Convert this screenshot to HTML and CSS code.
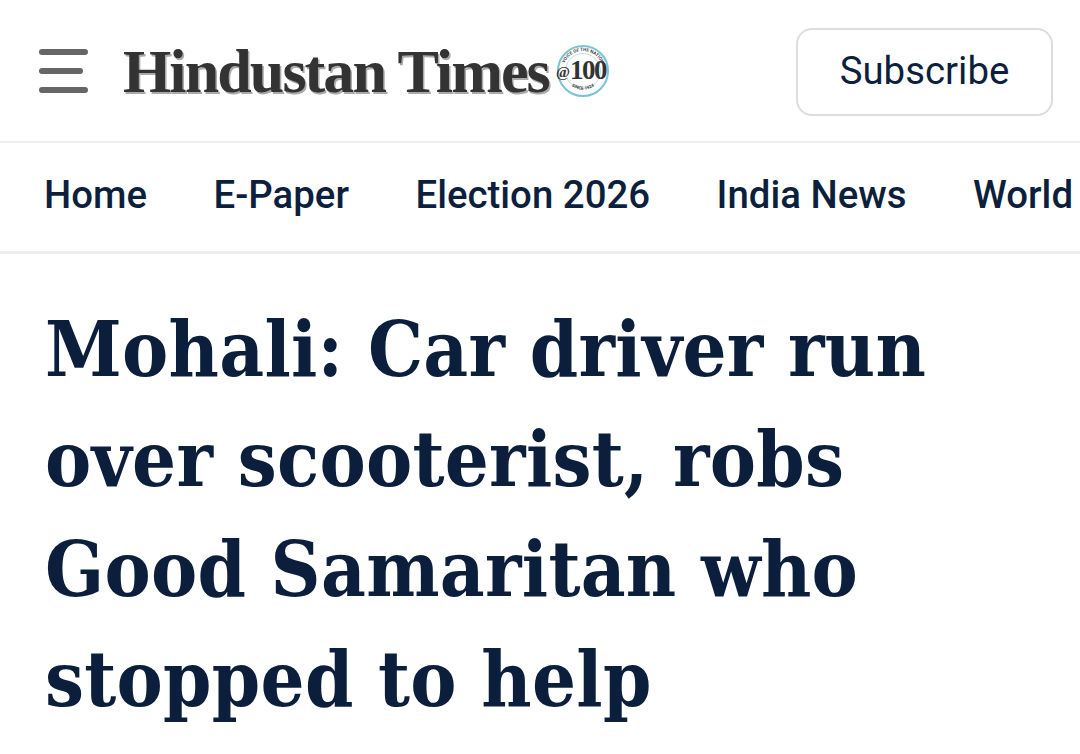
FILE: index.html
```html
<!DOCTYPE html>
<html lang="en">
<head>
<meta charset="utf-8">
<title>Hindustan Times</title>
<link rel="stylesheet" href="styles.css">
</head>
<body>
<header class="topbar">
  <div class="brand">
    <div class="burger" aria-label="Menu"><span class="bar"></span><span class="bar bar-short"></span><span class="bar"></span></div>
    <a class="logo">Hindustan Times</a>
    <svg class="badge" width="54" height="54" viewBox="0 0 54 54">
      <defs>
        <path id="arcTop" d="M7 27a20 20 0 0 1 40 0"/>
        <path id="arcBot" d="M11 37a19 19 0 0 0 32 0"/>
      </defs>
      <circle cx="27" cy="27" r="25" fill="#fff" stroke="#7cc4d2" stroke-width="2"/>
      <circle cx="27" cy="27" r="17.500" fill="#fff" stroke="#bfe0e6" stroke-width="1"/>
      <text class="badge-small"><textPath href="#arcTop" startOffset="50%" text-anchor="middle">VOICE OF THE NATION</textPath></text>
      <text class="badge-small"><textPath href="#arcBot" startOffset="50%" text-anchor="middle">SINCE 1924</textPath></text>
      <text class="badge-mark" x="0" y="35"><tspan class="badge-at" dy="-2">@</tspan><tspan class="badge-num" dy="2">100</tspan></text>
    </svg>
  </div>
  <a class="subscribe">Subscribe</a>
</header>
<nav class="nav">
  <a>Home</a>
  <a>E-Paper</a>
  <a>Election 2026</a>
  <a>India News</a>
  <a>World</a>
</nav>
<main class="article">
  <h1 class="headline">Mohali: Car driver run over scooterist, robs Good Samaritan who stopped to help</h1>
</main>
</body>
</html>
```
FILE: styles.css
```css
* { box-sizing: border-box; }
html, body { margin: 0; padding: 0; background: #fff; }
body { width: 1080px; height: 754px; overflow: hidden; font-family: Roboto, sans-serif; color: #0c1f3c; }

.topbar {
  height: 143px;
  border-bottom: 2px solid #eeeeee;
  padding: 0 27px 0 39px;
  display: flex;
  align-items: center;
  justify-content: space-between;
}
.brand { display: flex; align-items: center; }
.burger { width: 49px; height: 44px; display: flex; flex-direction: column; justify-content: space-between; margin-right: 35px; }
.bar { display: block; height: 6px; width: 49px; background: #666; border-radius: 3px; }
.bar-short { width: 44px; }
.logo {
  font-family: "Liberation Serif", serif;
  font-weight: 700;
  font-size: 62px;
  line-height: 60px;
  letter-spacing: -1.900px;
  color: #333;
  text-shadow: 1.500px 1.500px 0 #aaa;
  white-space: nowrap;
}
.badge { margin-left: 7px; flex: none; }
.badge-small { font-family: Roboto, sans-serif; font-size: 4.500px; font-weight: 700; fill: #444; }
.badge-mark { font-family: "Liberation Serif", serif; font-weight: 700; fill: #333; }
.badge-at { font-size: 15px; }
.badge-num { font-size: 27px; letter-spacing: -1.500px; }

.subscribe {
  width: 257px;
  height: 88px;
  margin-top: 2px;
  border: 2px solid #dddddd;
  border-radius: 16px;
  display: flex;
  align-items: center;
  justify-content: center;
  font-size: 38.400px;
  padding-bottom: 2px;
}

.nav {
  height: 111px;
  border-bottom: 3px solid #eeeeee;
  padding: 0 0 5px 44px;
  display: flex;
  align-items: center;
  gap: 66.500px;
  overflow: hidden;
  white-space: nowrap;
  font-size: 38.400px;
  font-weight: 500;
}

.article { padding: 40px 45px 0; }
.headline {
  margin: 0;
  width: 960px;
  font-family: "DejaVu Serif Condensed", "DejaVu Serif", serif;
  font-stretch: condensed;
  font-weight: 700;
  font-size: 77px;
  letter-spacing: 0.300px;
  line-height: 110px;
  color: #0b1e3b;
}
```
